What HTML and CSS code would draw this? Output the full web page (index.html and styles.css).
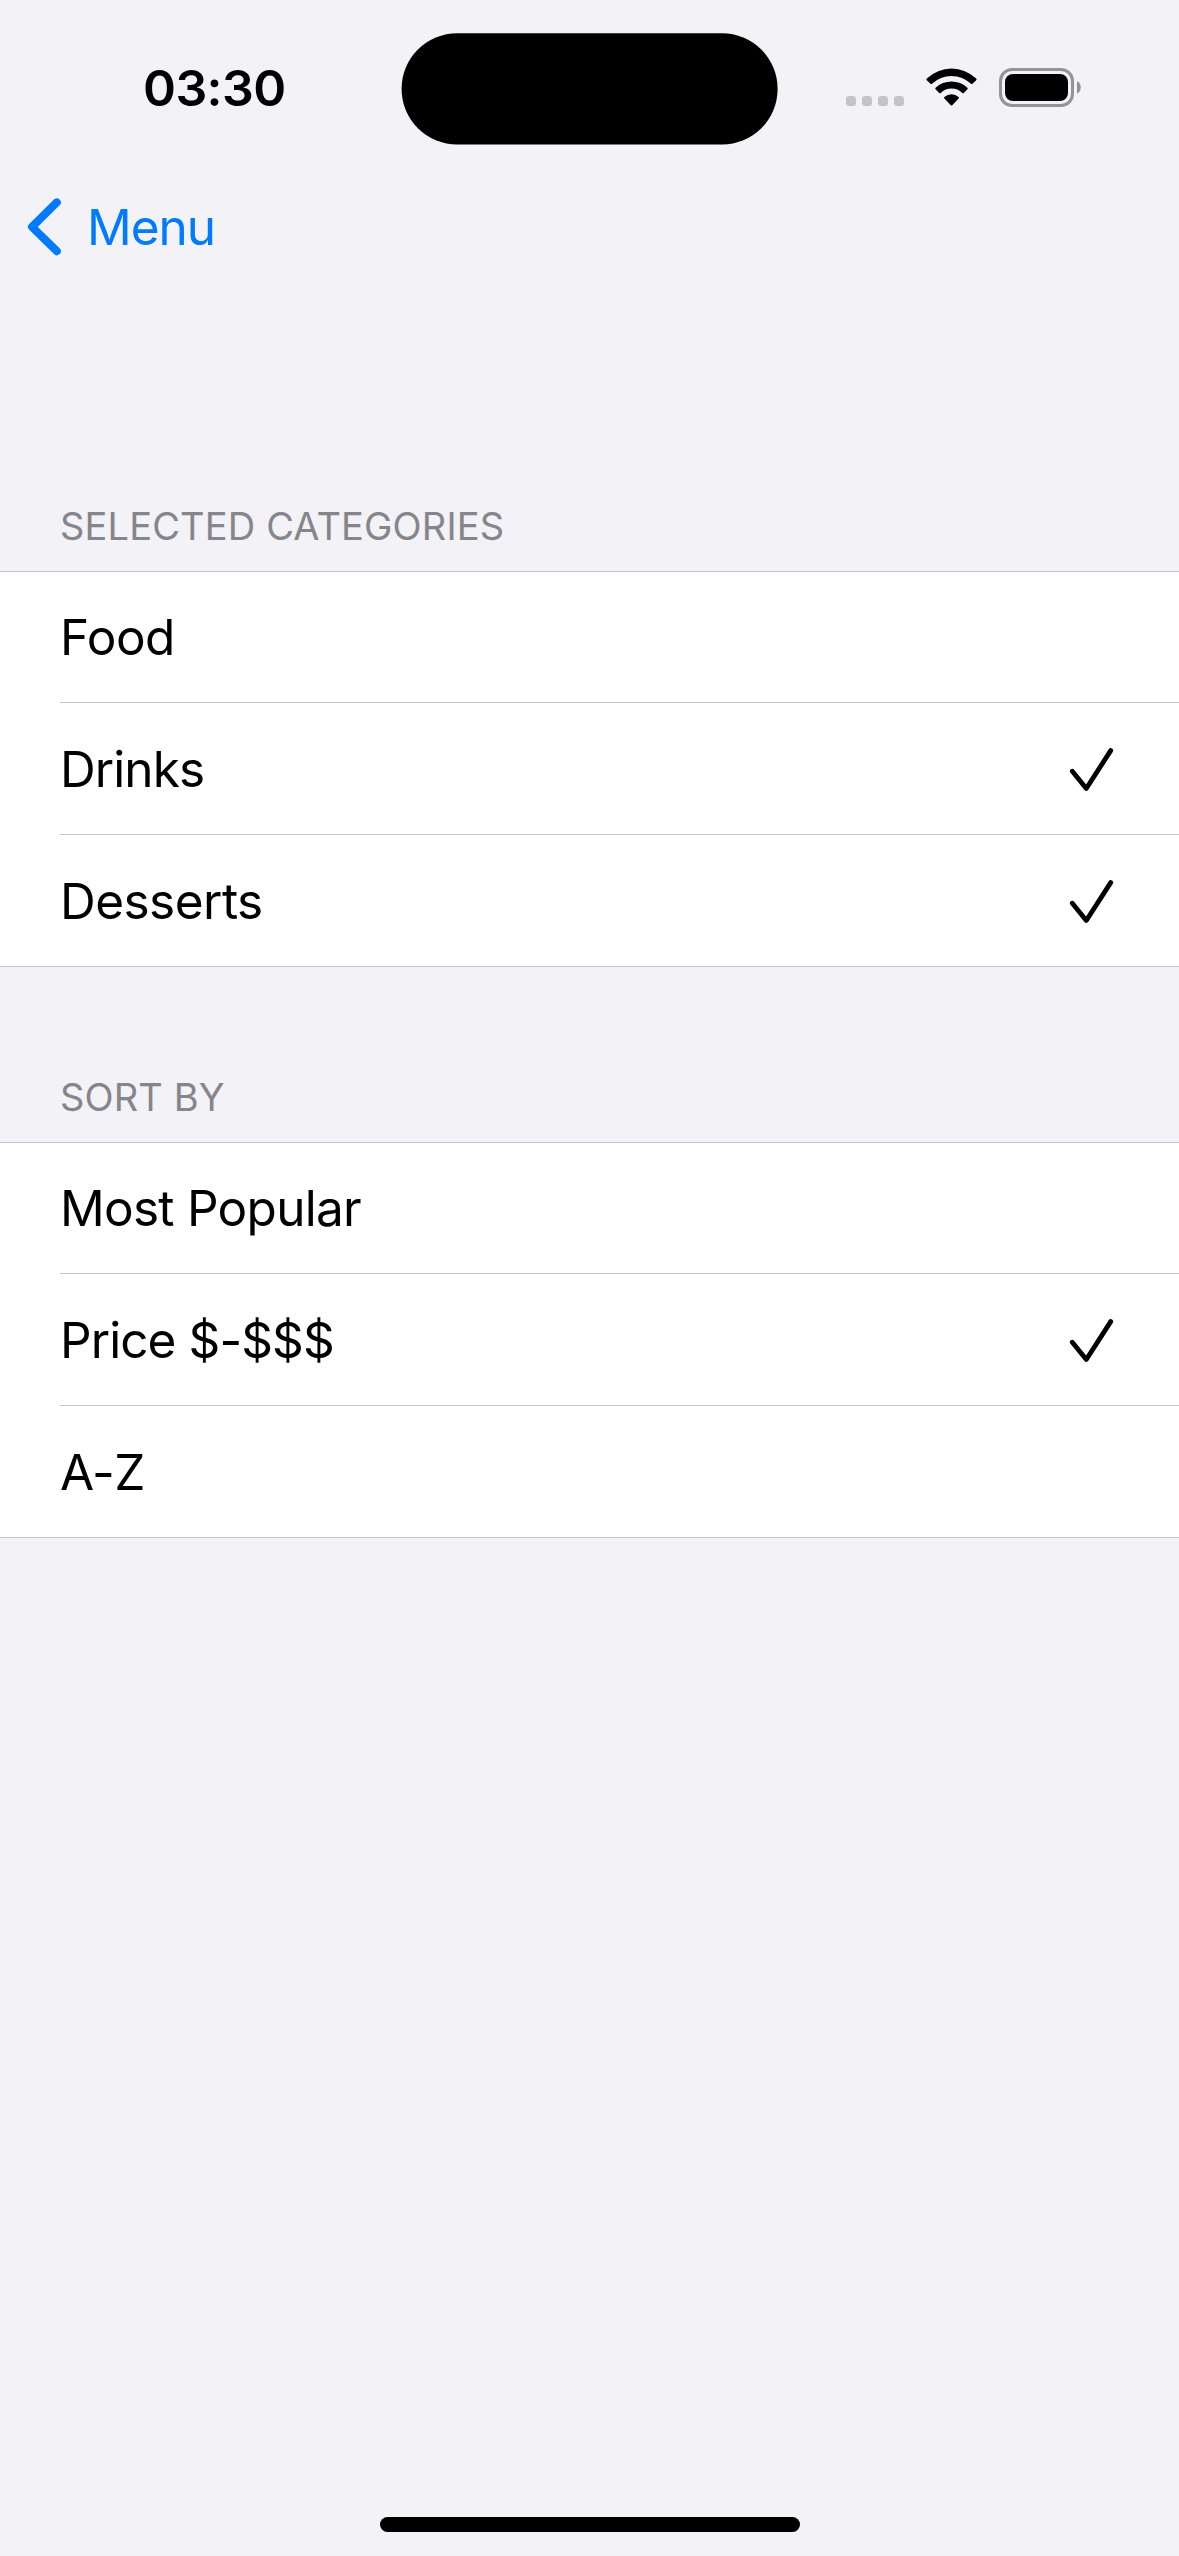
FILE: index.html
```html
<!DOCTYPE html>
<html lang="en">
<head>
<meta charset="utf-8">
<title>Menu filters</title>
<link rel="stylesheet" href="styles.css">
</head>
<body>
<div class="screen">
  <header class="status">
    <div class="status-side status-left"><span class="clock">03:30</span></div>
    <svg class="island" width="378" height="114" viewBox="0 0 378 114"><rect x="1.6" y="2.3" width="376" height="111.2" rx="55.6"/></svg>
    <div class="status-side status-right">
      <svg class="signal" width="58" height="40" viewBox="0 0 58 40" fill="#c4c3c8">
        <rect x="0" y="28" width="10" height="10" rx="3.2"/>
        <rect x="16" y="28" width="10" height="10" rx="3.2"/>
        <rect x="32" y="28" width="10" height="10" rx="3.2"/>
        <rect x="48" y="28" width="10" height="10" rx="3.2"/>
      </svg>
      <svg class="wifi" width="51" height="40" viewBox="0 0 51 40">
        <path d="M.8 10.6A35.5 35.5 0 0 1 50.2 10.6Q50.9 11.4 50.2 12.2L46.5 15.7Q45.8 16.4 45 15.7A28.4 28.4 0 0 0 6 15.7Q5.2 16.4 4.5 15.7L.8 12.2Q.1 11.4.8 10.6Z"/>
        <path d="M9.6 19.8A22.9 22.9 0 0 1 41.4 19.8Q42.1 20.6 41.4 21.3L37.8 24.9Q37.1 25.6 36.3 24.9A15.7 15.7 0 0 0 14.7 24.9Q13.9 25.6 13.2 24.9L9.6 21.3Q8.9 20.6 9.6 19.8Z"/>
        <path d="M18.4 29A10.4 10.4 0 0 1 32.6 29Q33.4 29.8 32.6 30.6L26.2 37.2Q25.5 37.9 24.8 37.2L18.4 30.6Q17.6 29.8 18.4 29Z"/>
      </svg>
      <svg class="battery" width="82" height="40" viewBox="0 0 82 40">
        <rect x="1.5" y="1.5" width="72" height="36" rx="11.5" fill="none" stroke="#949397" stroke-width="3"/>
        <rect x="6" y="6" width="63" height="27" rx="8"/>
        <path d="M78 13.3C83 15.5 83 23.5 78 25.7Z" fill="#949397"/>
      </svg>
    </div>
  </header>

  <nav class="navbar">
    <a class="back">
      <svg width="40" height="64" viewBox="0 0 40 64"><path d="M32.8 7.4 8 31.8 32.8 56.2" fill="none" stroke="#007aff" stroke-width="8" stroke-linecap="round" stroke-linejoin="round"/></svg>
      <span>Menu</span>
    </a>
  </nav>

  <main>
    <section>
      <h2 class="heading">SELECTED CATEGORIES</h2>
      <ul class="group">
        <li class="row"><span class="loose">Food</span></li>
        <li class="row"><span class="tight">Drinks</span><svg class="check" width="45" height="46" viewBox="0 0 45 46"><path d="M3.3 25.2 17.3 42.5 41.7 4.6"/></svg></li>
        <li class="row"><span class="loose">Desserts</span><svg class="check" width="45" height="46" viewBox="0 0 45 46"><path d="M3.3 25.2 17.3 42.5 41.7 4.6"/></svg></li>
      </ul>
    </section>
    <section>
      <h2 class="heading">SORT BY</h2>
      <ul class="group">
        <li class="row"><span>Most Popular</span></li>
        <li class="row"><span class="tight">Price $-$$$</span><svg class="check" width="45" height="46" viewBox="0 0 45 46"><path d="M3.3 25.2 17.3 42.5 41.7 4.6"/></svg></li>
        <li class="row"><span class="loose">A-Z</span></li>
      </ul>
    </section>
  </main>

  <footer class="home"><div class="home-bar"></div></footer>
</div>
</body>
</html>
```
FILE: styles.css
```css
* {
  box-sizing: border-box;
}

body {
  margin: 0;
  background: #f2f2f7;
  color: #000;
  font-family: Inter, "Liberation Sans", sans-serif;
}

svg {
  display: block;
  flex: none;
}

.screen {
  display: flex;
  flex-direction: column;
  width: 1179px;
  height: 2556px;
}

.status {
  display: grid;
  grid-template-columns: 400px 378px 1fr;
  align-items: center;
  height: 176px;
}

.status-side {
  display: flex;
  align-items: center;
}

.status-left {
  padding-left: 143px;
}

.clock {
  font-size: 50px;
  font-weight: 600;
  line-height: 60px;
  letter-spacing: -0.6px;
}

.status-right {
  padding-left: 68px;
}

.wifi {
  margin-left: 22px;
}

.battery {
  margin-left: 22px;
}

.navbar {
  display: flex;
  align-items: center;
  height: 102px;
  padding-left: 24px;
}

.back {
  display: flex;
  align-items: center;
  gap: 23px;
  color: #007aff;
  font-size: 49.5px;
  line-height: 60px;
  letter-spacing: -1px;
}

main {
  display: flex;
  flex-direction: column;
  gap: 107px;
  padding-top: 225px;
}

.heading {
  margin: 0;
  padding: 0 60px 22px;
  color: #85858b;
  font-size: 38px;
  font-weight: 400;
  line-height: 46px;
  letter-spacing: 0.15px;
}

.group {
  margin: 0;
  padding: 0 0 0 60px;
  list-style: none;
  background: #fff;
  border-top: 1px solid #c6c6c8;
  border-bottom: 1px solid #c6c6c8;
}

.row {
  display: flex;
  align-items: center;
  justify-content: space-between;
  height: 132px;
  padding-right: 65px;
  border-bottom: 1px solid #c6c6c8;
  font-size: 49.5px;
  line-height: 60px;
  letter-spacing: -0.73px;
}

.row:first-child {
  height: 131px;
}

.row:last-child {
  height: 131px;
  border-bottom: 0;
}

.loose {
  letter-spacing: -0.53px;
}

.tight {
  letter-spacing: -0.92px;
}

.check {
  fill: none;
  stroke: #000;
  stroke-width: 4.8;
  stroke-linecap: round;
  stroke-linejoin: round;
}

.home {
  display: flex;
  justify-content: center;
  margin-top: auto;
  padding-bottom: 24px;
}

.home-bar {
  width: 420px;
  height: 15px;
  border-radius: 7.5px;
  background: #000;
}
```
